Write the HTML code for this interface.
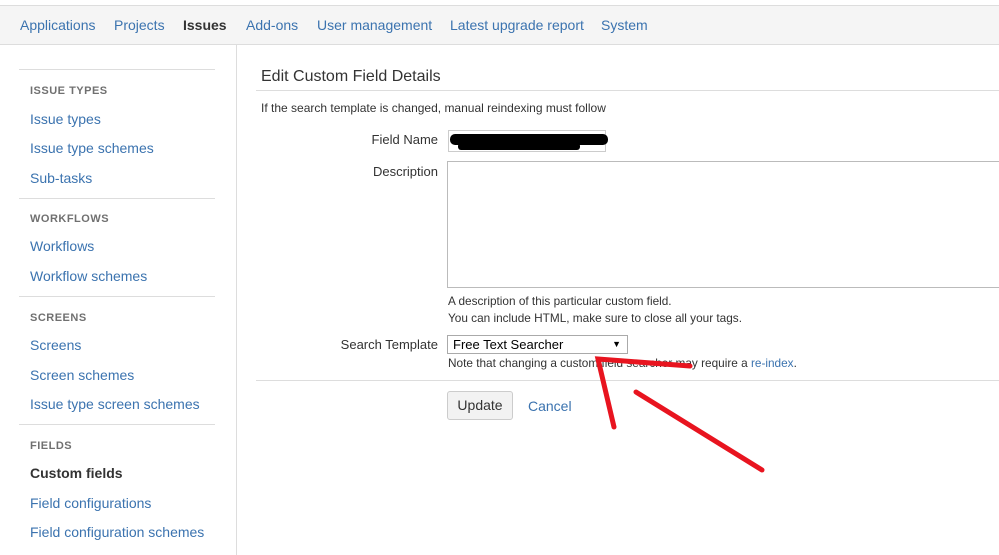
<!DOCTYPE html>
<html><head><style>
body{margin:0;width:999px;height:555px;overflow:hidden;background:#fff;font-family:"Liberation Sans",Arial,sans-serif;position:relative;color:#333}
.top{position:absolute;left:0;top:0;width:999px;height:5px;background:#fff;border-bottom:1px solid #ddd}
.nav{position:absolute;left:0;top:6px;width:999px;height:38px;background:#f5f5f5;border-bottom:1px solid #ddd}
.nav span{position:absolute;top:11px;font-size:14px;color:#3b73af}
.side{position:absolute;left:236px;top:45px;width:1px;height:510px;background:#ddd}
.hr{position:absolute;height:1px;background:#ddd}
.h{position:absolute;left:30px;font-size:11px;font-weight:bold;color:#707070;letter-spacing:.5px}
.l{position:absolute;left:30px;font-size:14px;color:#3b73af}
.t{position:absolute;font-size:12px;color:#333}
.lab{position:absolute;right:561px;font-size:13px;color:#333}
</style></head><body>
<div class="top"></div>
<div class="nav">
<span style="left:20px">Applications</span><span style="left:114px">Projects</span><span style="left:183px;color:#333;font-weight:bold">Issues</span><span style="left:246px">Add-ons</span><span style="left:317px">User management</span><span style="left:450px">Latest upgrade report</span><span style="left:601px">System</span>
</div>
<div class="side"></div>
<div class="hr" style="left:19px;width:196px;top:69px"></div>
<div class="h" style="top:85px">ISSUE TYPES</div>
<div class="l" style="top:111px">Issue types</div>
<div class="l" style="top:140px">Issue type schemes</div>
<div class="l" style="top:170px">Sub-tasks</div>
<div class="hr" style="left:19px;width:196px;top:198px"></div>
<div class="h" style="top:213px">WORKFLOWS</div>
<div class="l" style="top:238px">Workflows</div>
<div class="l" style="top:268px">Workflow schemes</div>
<div class="hr" style="left:19px;width:196px;top:296px"></div>
<div class="h" style="top:312px">SCREENS</div>
<div class="l" style="top:337px">Screens</div>
<div class="l" style="top:367px">Screen schemes</div>
<div class="l" style="top:396px">Issue type screen schemes</div>
<div class="hr" style="left:19px;width:196px;top:424px"></div>
<div class="h" style="top:440px">FIELDS</div>
<div class="l" style="top:465px;color:#333;font-weight:bold">Custom fields</div>
<div class="l" style="top:495px">Field configurations</div>
<div class="l" style="top:524px">Field configuration schemes</div>

<div style="position:absolute;left:261px;top:68px;font-size:16px;color:#333">Edit Custom Field Details</div>
<div class="hr" style="left:256px;width:743px;top:90px"></div>
<div class="t" style="left:261px;top:101px">If the search template is changed, manual reindexing must follow</div>
<div class="lab" style="top:132px">Field Name</div>
<div style="position:absolute;left:448px;top:130px;width:156px;height:20px;border:1px solid #ccc"></div>
<div style="position:absolute;left:450px;top:134px;width:158px;height:11px;background:#000;border-radius:5px"></div>
<div style="position:absolute;left:458px;top:143px;width:122px;height:7px;background:#000;border-radius:3px"></div>
<div class="lab" style="top:164px">Description</div>
<div style="position:absolute;left:447px;top:161px;width:560px;height:125px;border:1px solid #bbb"></div>
<div class="t" style="left:448px;top:294px;font-size:11.8px">A description of this particular custom field.</div>
<div class="t" style="left:448px;top:311px;font-size:11.8px">You can include HTML, make sure to close all your tags.</div>
<div class="lab" style="top:337px">Search Template</div>
<div style="position:absolute;left:447px;top:335px;border:1px solid #aaa;font-size:13px;color:#000;line-height:17px;padding-left:5px;box-sizing:border-box;width:181px;height:19px">Free Text Searcher<span style="position:absolute;right:6px;font-size:9px">▼</span></div>
<div class="t" style="left:448px;top:356px;font-size:11.8px">Note that changing a custom field searcher may require a <span style="color:#3b73af">re-index</span>.</div>
<div class="hr" style="left:256px;width:743px;top:380px"></div>
<div style="position:absolute;left:447px;top:391px;width:66px;height:29px;border:1px solid #ccc;border-radius:3px;background:#f2f2f2;box-sizing:border-box;font-size:14px;text-align:center;line-height:27px">Update</div>
<div style="position:absolute;left:528px;top:398px;font-size:14px;color:#3b73af">Cancel</div>
<svg style="position:absolute;left:0;top:0" width="999" height="555">
<g stroke="#e8141f" stroke-width="5" stroke-linecap="round" fill="none">
<path d="M614 427 L598 359 L690 366"/>
<path d="M636 392 L762 470"/>
</g></svg>
</body></html>
